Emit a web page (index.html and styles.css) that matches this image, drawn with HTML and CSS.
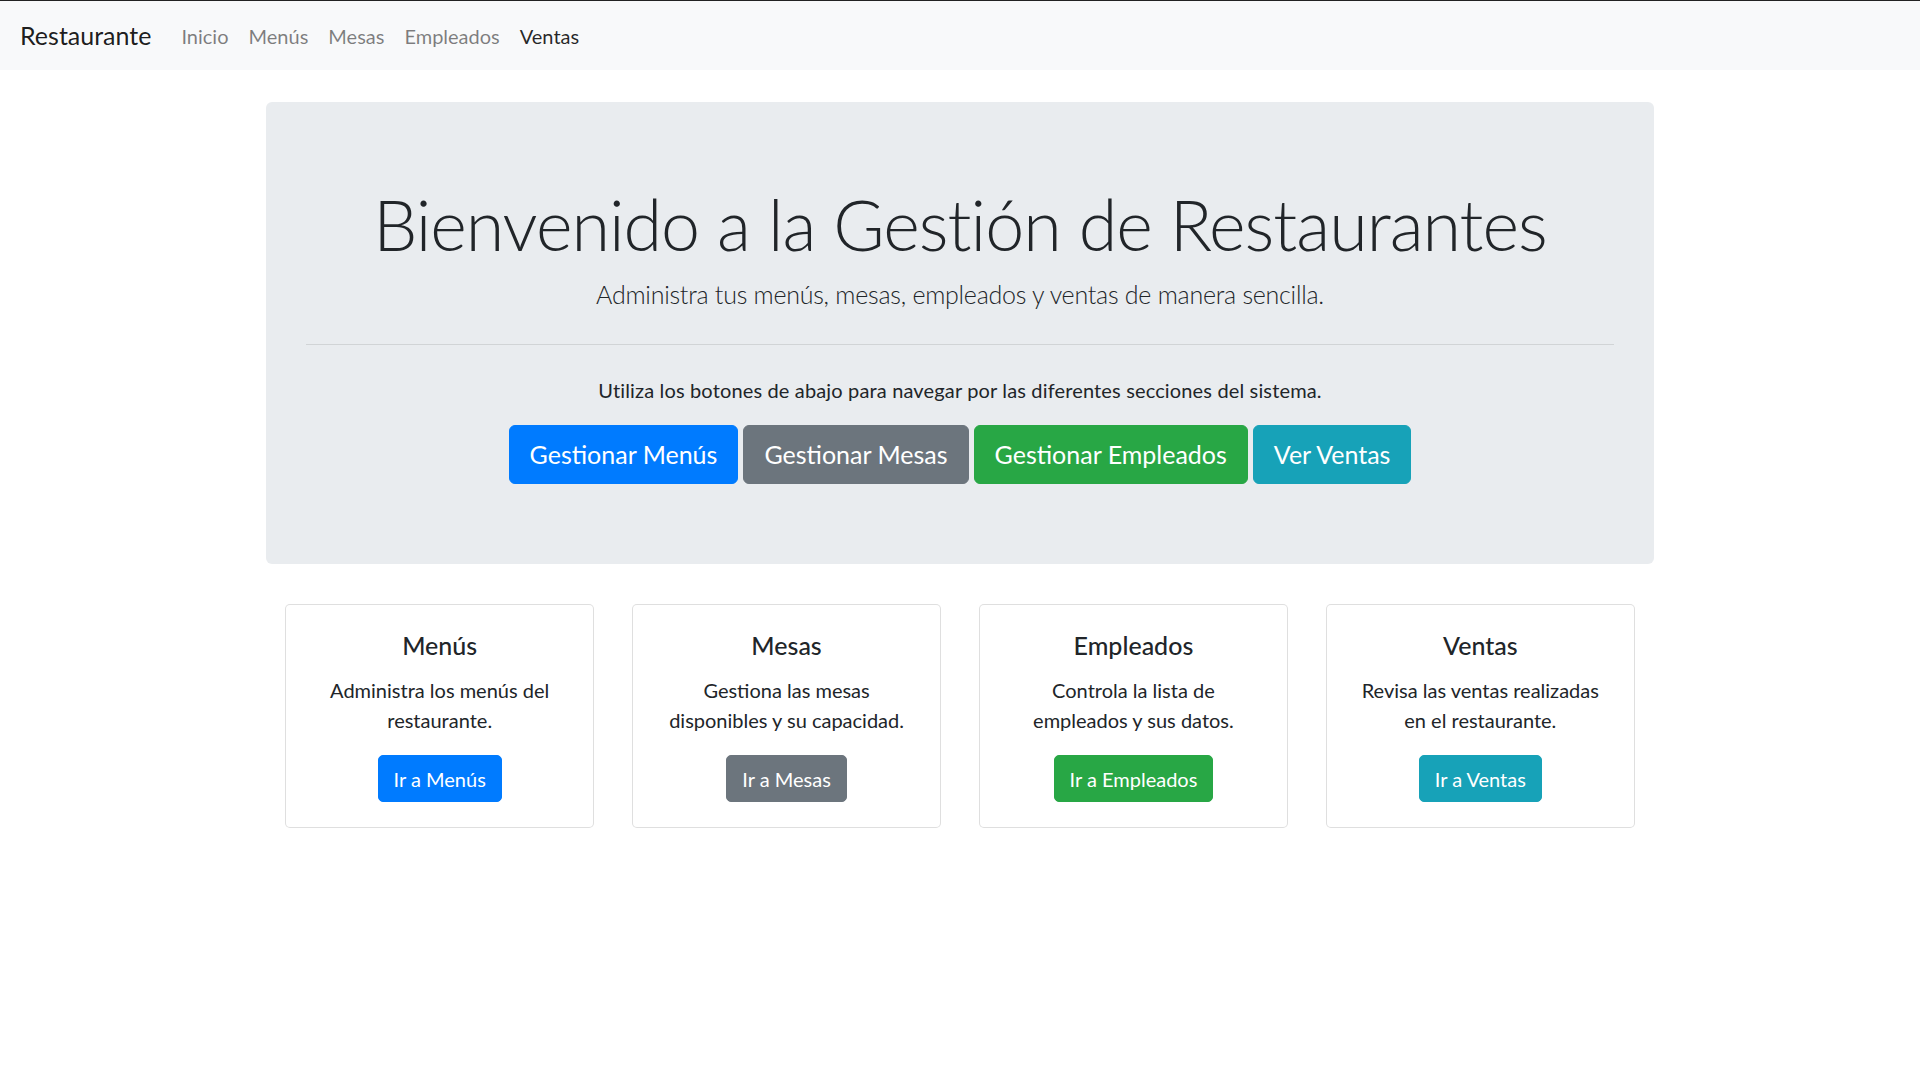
FILE: index.html
```html
<!DOCTYPE html>
<html lang="es">
<head>
<meta charset="utf-8">
<title>Restaurante</title>
<link rel="stylesheet" href="styles.css">
</head>
<body>
<nav class="navbar">
  <a class="brand" href="#">Restaurante</a>
  <ul class="nav">
    <li><a class="nav-link" href="#">Inicio</a></li>
    <li><a class="nav-link" href="#">Menús</a></li>
    <li><a class="nav-link" href="#">Mesas</a></li>
    <li><a class="nav-link" href="#">Empleados</a></li>
    <li><a class="nav-link active" href="#">Ventas</a></li>
  </ul>
</nav>
<main class="container">
  <section class="jumbotron">
    <h1 class="display">Bienvenido a la Gestión de Restaurantes</h1>
    <p class="lead">Administra tus menús, mesas, empleados y ventas de manera sencilla.</p>
    <hr class="divider">
    <p class="intro">Utiliza los botones de abajo para navegar por las diferentes secciones del sistema.</p>
    <div class="btn-row">
      <a class="btn btn-lg btn-primary" href="#">Gestionar Menús</a>
      <a class="btn btn-lg btn-secondary" href="#">Gestionar Mesas</a>
      <a class="btn btn-lg btn-success" href="#">Gestionar Empleados</a>
      <a class="btn btn-lg btn-info" href="#">Ver Ventas</a>
    </div>
  </section>
  <div class="cards">
    <div class="col">
      <div class="card">
        <h5 class="card-title">Menús</h5>
        <p class="card-text">Administra los menús del restaurante.</p>
        <a class="btn btn-primary" href="#">Ir a Menús</a>
      </div>
    </div>
    <div class="col">
      <div class="card">
        <h5 class="card-title">Mesas</h5>
        <p class="card-text">Gestiona las mesas disponibles y su capacidad.</p>
        <a class="btn btn-secondary" href="#">Ir a Mesas</a>
      </div>
    </div>
    <div class="col">
      <div class="card">
        <h5 class="card-title">Empleados</h5>
        <p class="card-text">Controla la lista de empleados y sus datos.</p>
        <a class="btn btn-success" href="#">Ir a Empleados</a>
      </div>
    </div>
    <div class="col">
      <div class="card">
        <h5 class="card-title">Ventas</h5>
        <p class="card-text">Revisa las ventas realizadas en el restaurante.</p>
        <a class="btn btn-info" href="#">Ir a Ventas</a>
      </div>
    </div>
  </div>
</main>
</body>
</html>
```
FILE: styles.css
```css
* { box-sizing: border-box; }
html, body { margin: 0; padding: 0; }
body {
  font-family: "Segoe UI", Lato, "Noto Sans", sans-serif;
  font-size: 20px;
  line-height: 1.5;
  color: #212529;
  background: #fff;
  border-top: 1px solid #222;
}
a { text-decoration: none; }

.navbar {
  display: flex;
  align-items: center;
  background: #f8f9fa;
  padding: 10px 20px;
  height: 69px;
}
.brand {
  font-size: 25px;
  line-height: 37.5px;
  color: rgba(0,0,0,.9);
  margin-right: 20px;
  padding: 6px 0;
}
.nav {
  display: flex;
  list-style: none;
  margin: 0;
  padding: 0;
}
.nav-link {
  display: block;
  padding: 10px 10px;
  color: rgba(0,0,0,.5);
}
.nav-link.active { color: rgba(0,0,0,.85); }

.container {
  width: 1387.5px;
  margin: 0 auto;
}
.jumbotron {
  margin-top: 32px;
  margin-bottom: 40px;
  background: #e9ecef;
  border-radius: 6px;
  padding: 80px 40px;
  text-align: center;
}
.display {
  margin: 0 0 10px;
  font-size: 70px;
  font-weight: 300;
  line-height: 1.2;
  letter-spacing: -1px;
}
.lead {
  margin: 0;
  font-size: 25px;
  font-weight: 300;
  line-height: 1.5;
  letter-spacing: -0.25px;
}
.divider {
  margin: 30px 0;
  border: 0;
  border-top: 1px solid rgba(0,0,0,.1);
}
.intro { margin: 0 0 20px; letter-spacing: 0.15px; }
.btn-row {
  display: flex;
  justify-content: center;
  gap: 5px;
}
.btn {
  display: inline-block;
  color: #fff;
  border: 1px solid transparent;
  border-radius: 5px;
  padding: 7.5px 15px;
  font-size: 20px;
  line-height: 1.5;
}
.btn-lg {
  padding: 10px 20px;
  font-size: 25px;
  border-radius: 6px;
}
.btn-primary { background: #007bff; border-color: #007bff; }
.btn-secondary { background: #6c757d; border-color: #6c757d; }
.btn-success { background: #28a745; border-color: #28a745; }
.btn-info { background: #17a2b8; border-color: #17a2b8; }

.cards {
  display: grid;
  grid-template-columns: repeat(4, 1fr);
}
.col { padding: 0 18.75px; }
.card {
  border: 1px solid rgba(0,0,0,.125);
  border-radius: 5px;
  padding: 25px;
  text-align: center;
  background: #fff;
}
.card-title {
  margin: 0 0 15px;
  font-size: 25px;
  font-weight: 500;
  line-height: 1.2;
}
.card-text { margin: 0 0 20px; }
```
